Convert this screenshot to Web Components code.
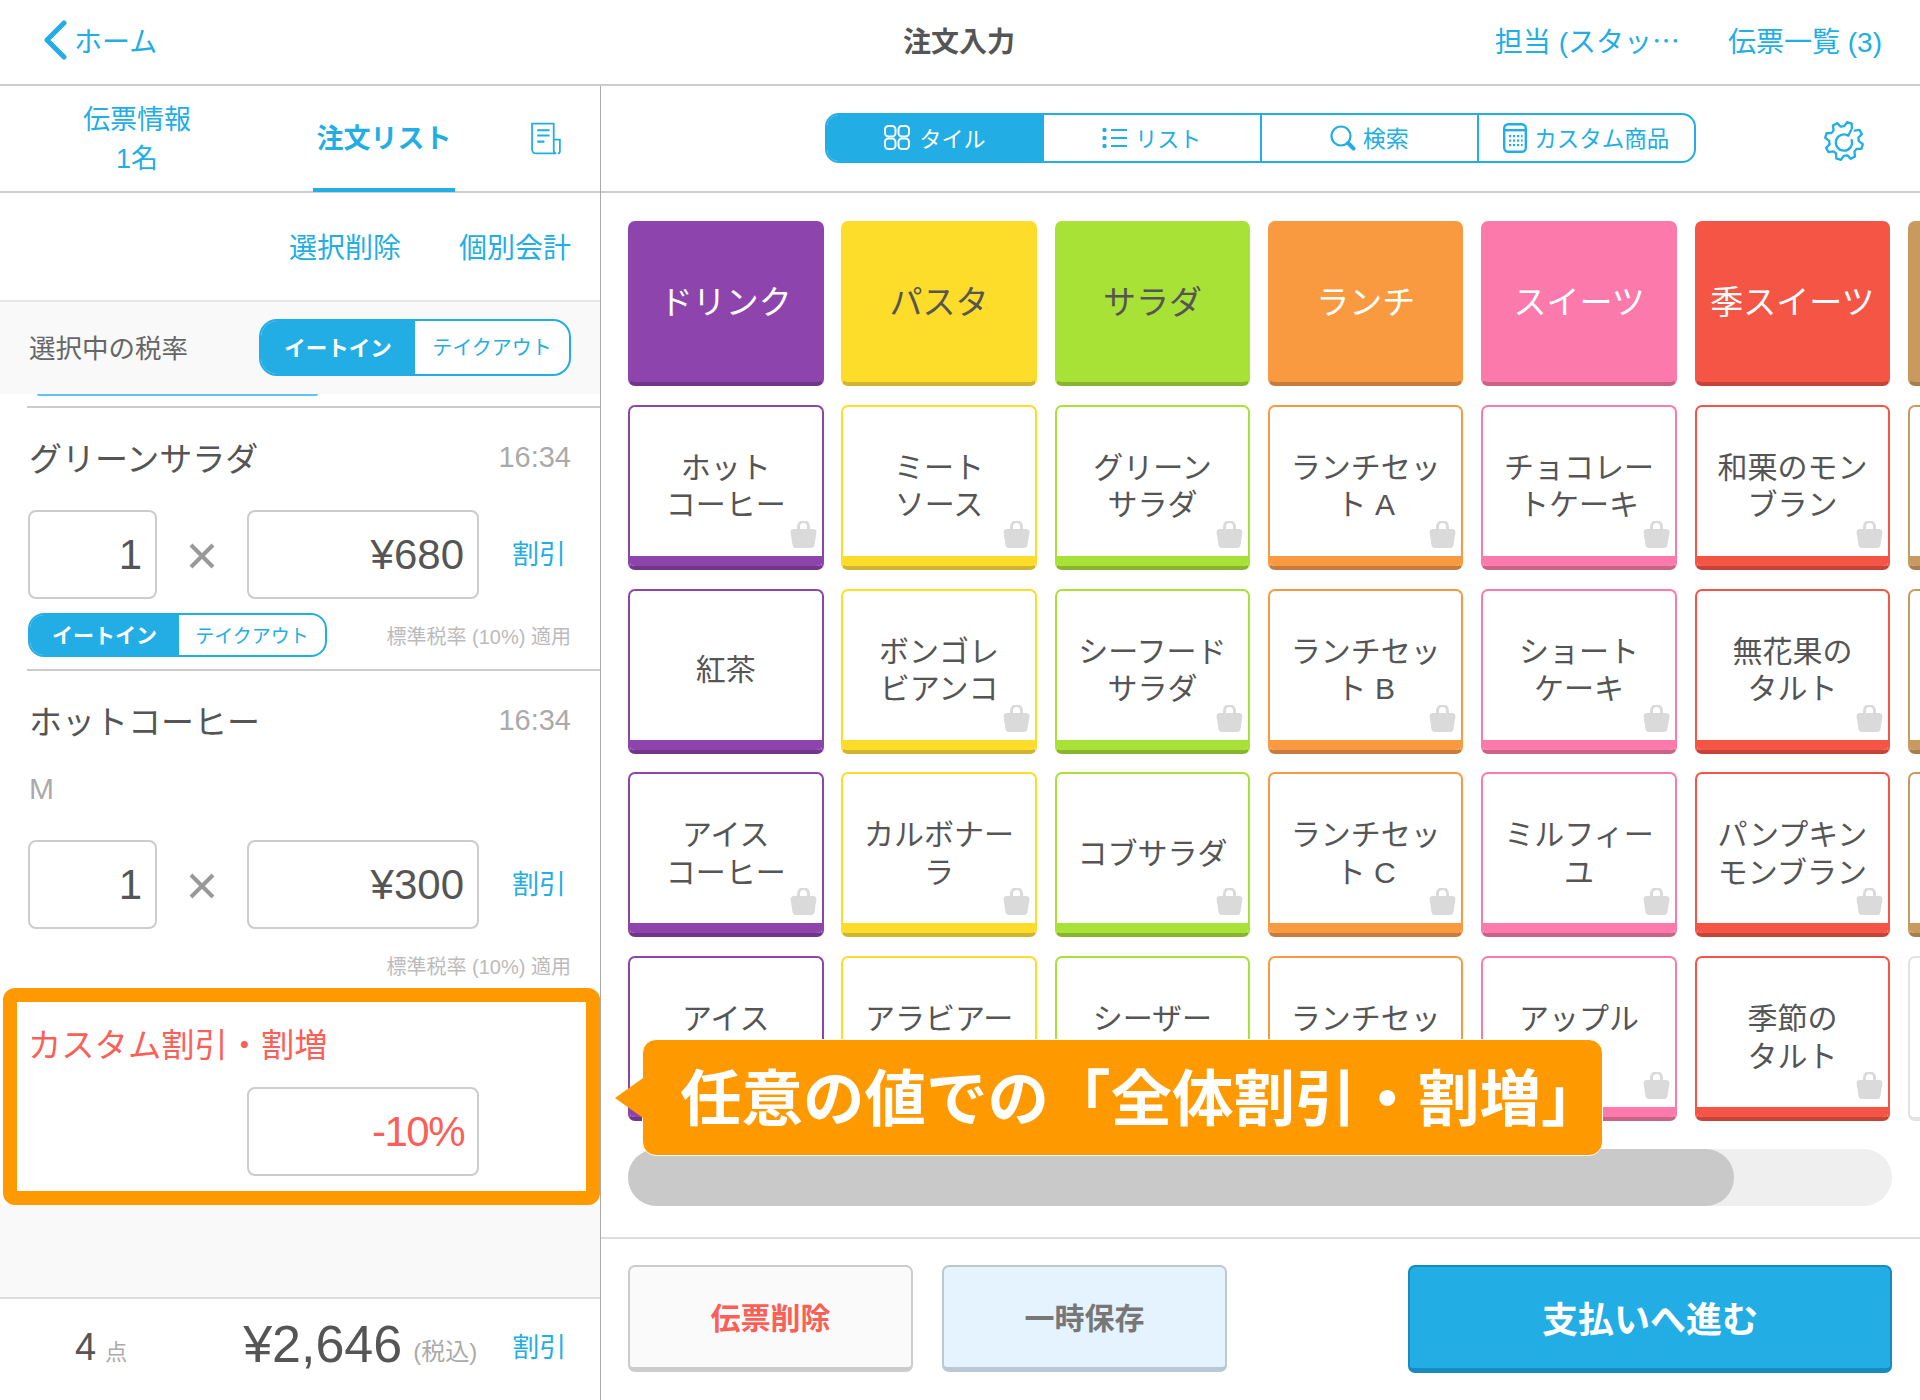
<!DOCTYPE html>
<html lang="ja">
<head>
<meta charset="utf-8">
<title>注文入力</title>
<style>
  html, body { margin: 0; padding: 0; background: #fff; }
  body { width: 1920px; height: 1400px; overflow: hidden; font-family: "Liberation Sans", "Noto Sans CJK JP", sans-serif; color: #555; }
</style>
</head>
<body>
<pos-app></pos-app>

<script>
const BLUE = '#22aee5';

// small helper, every element is just css + markup in an open shadow root
function define(name, css, render) {
  customElements.define(name, class extends HTMLElement {
    connectedCallback() {
      if (this.shadowRoot) return;
      this.attachShadow({ mode: 'open' });
      this.shadowRoot.innerHTML = `<style>${css}</style>${render(this)}`;
    }
  });
}

// outline of the settings gear, left open at the upper right
function gearPath(cx, cy, ro, ri, teeth) {
  const pts = [];
  const step = 360 / teeth;
  for (let i = 0; i < teeth; i++) {
    const a = -22 + i * step;
    [[ri, -0.5], [ro, -0.3], [ro, 0.02], [ri, 0.2]].forEach(([r, f]) => {
      const t = (a + f * step) * Math.PI / 180;
      pts.push((cx + r * Math.cos(t)).toFixed(1) + ' ' + (cy + r * Math.sin(t)).toFixed(1));
    });
  }
  return 'M' + pts.join('L');
}

const icons = {
  tile: `<svg width="26" height="25" viewBox="0 0 26 25" fill="none" stroke="currentColor" stroke-width="2"><rect x="1" y="1" width="10.5" height="10.5" rx="3.5"/><rect x="14.5" y="1" width="10.5" height="10.5" rx="3.5"/><rect x="1" y="13.5" width="10.5" height="10.5" rx="3.5"/><rect x="14.5" y="13.5" width="10.5" height="10.5" rx="3.5"/></svg>`,
  list: `<svg width="26" height="22" viewBox="0 0 26 22" fill="currentColor"><circle cx="2.5" cy="3" r="2.2"/><circle cx="2.5" cy="11" r="2.2"/><circle cx="2.5" cy="19" r="2.2"/><rect x="9" y="2" width="16" height="2"/><rect x="9" y="10" width="16" height="2"/><rect x="9" y="18" width="16" height="2"/></svg>`,
  search: `<svg width="26" height="26" viewBox="0 0 26 26" fill="none" stroke="currentColor"><circle cx="11" cy="11" r="9.5" stroke-width="2.2"/><path d="M18 18l5.5 5.5" stroke-width="4" stroke-linecap="round"/></svg>`,
  calc: `<svg width="24" height="30" viewBox="0 0 24 30"><rect x="1.2" y="1.2" width="21.6" height="27.6" rx="4" fill="none" stroke="currentColor" stroke-width="2.4"/><rect x="1.2" y="6" width="21.6" height="2.4" fill="currentColor"/><g fill="currentColor"><rect x="6" y="12" width="2.2" height="2.2"/><rect x="10" y="12" width="2.2" height="2.2"/><rect x="14" y="12" width="2.2" height="2.2"/><rect x="18" y="12" width="1.6" height="2.2"/><rect x="6" y="16.5" width="2.2" height="2.2"/><rect x="10" y="16.5" width="2.2" height="2.2"/><rect x="14" y="16.5" width="2.2" height="2.2"/><rect x="18" y="16.5" width="1.6" height="2.2"/><rect x="6" y="21" width="2.2" height="2.2"/><rect x="10" y="21" width="2.2" height="2.2"/><rect x="14" y="21" width="2.2" height="2.2"/><rect x="18" y="21" width="1.6" height="2.2"/></g></svg>`,
  gear: `<svg width="42" height="42" viewBox="0 0 44 44" fill="none" stroke="${BLUE}" stroke-width="2.4" stroke-linejoin="round" stroke-linecap="round"><path d="${gearPath(22, 22, 20, 15.5, 8)}"/><path d="M29.5 10.5 L26.5 16.5 A8.5 8.5 0 1 0 30 21"/></svg>`,
  receipt: `<svg width="33" height="33" viewBox="0 0 32 32" fill="none" stroke="${BLUE}" stroke-width="1.7"><path d="M2 1.5h21v26c0 1.5 1 3 2.5 3H6c-2.5 0-4-1.5-4-4z"/><path d="M23 17h6v11c0 1.5-1 2.5-2 2.5"/><path d="M7 8h12M7 13h12M7 19h7" stroke-width="2"/></svg>`,
  bag: `<svg width="27" height="27" viewBox="0 0 27 27"><path d="M8.5 10V5.5a5 5 0 0 1 10 0V10" fill="none" stroke="#dadada" stroke-width="3"/><path d="M4 8h19c2 0 3.5 1 3.5 3l-2 13c-.3 2-1.5 3-3.5 3H6c-2 0-3.2-1-3.5-3l-2-13C.5 9 2 8 4 8z" fill="#dadada"/></svg>`
};

define('pos-header', `
  :host { display: grid; grid-template-columns: 1fr auto 1fr; align-items: center; height: 86px; box-sizing: border-box; border-bottom: 2px solid #ccc; padding-bottom: 5px; font-size: 28px; color: ${BLUE}; }
  .back { display: flex; align-items: center; gap: 7px; margin-left: 43px; }
  .title { text-align: center; font-weight: 700; color: #555; font-size: 28px; margin-left: -2px; }
  .right { display: flex; justify-content: flex-end; gap: 48px; margin-right: 38px; white-space: nowrap; }
  .dots { font-family: "Noto Sans CJK JP", sans-serif; }
`, () => `
  <div class="back">
    <svg width="24" height="40" viewBox="0 0 24 40" fill="none" stroke="${BLUE}" stroke-width="5" stroke-linecap="round" stroke-linejoin="round"><path d="M21 3L4 20l17 17"/></svg>
    <span>ホーム</span>
  </div>
  <div class="title">注文入力</div>
  <div class="right"><span>担当 (スタッ<span class="dots">…</span></span><span>伝票一覧 (3)</span></div>
`);

define('order-tabs', `
  :host { display: flex; height: 107px; box-sizing: border-box; border-bottom: 2px solid #ccc; color: ${BLUE}; font-size: 27px; }
  .info { width: 274px; margin-top: 15px; text-align: center; line-height: 39px; }
  .active { width: 142px; margin-left: 39px; box-sizing: border-box; border-bottom: 4px solid ${BLUE}; margin-bottom: -1px; font-weight: 700; text-align: center; line-height: 107px; font-size: 27px; white-space: nowrap; }
  .icon { display: flex; align-items: center; margin-left: 75px; }
`, () => `
  <div class="info">伝票情報<br>1名</div>
  <div class="active">注文リスト</div>
  <div class="icon">${icons.receipt}</div>
`);

define('order-actions', `
  :host { display: flex; justify-content: flex-end; align-items: center; gap: 58px; height: 107px; padding: 0 29px 2px 0; box-sizing: border-box; color: ${BLUE}; font-size: 28px; }
`, () => `<span>選択削除</span><span>個別会計</span>`);

define('tax-toggle', `
  :host { display: inline-flex; box-sizing: border-box; border: 2px solid ${BLUE}; border-radius: var(--r, 16px); overflow: hidden; background: #fff; width: var(--w); height: var(--h); font-size: var(--fs, 20px); }
  div { display: flex; align-items: center; justify-content: center; white-space: nowrap; padding-bottom: 2px; box-sizing: border-box; }
  .on { width: var(--on); background: ${BLUE}; color: #fff; font-weight: 700; }
  .off { flex: 1; color: ${BLUE}; font-size: var(--off, 20px); }
`, () => `<div class="on">イートイン</div><div class="off">テイクアウト</div>`);

define('tax-rate-row', `
  :host { display: flex; align-items: center; justify-content: space-between; height: 94px; box-sizing: border-box; padding: 0 29px; background: #f9f9f9; border-top: 2px solid #e6e6e6; font-size: 26.5px; color: #666; }
  span { margin-top: -4px; }
  tax-toggle { --w: 312px; --h: 57px; --on: 154px; --fs: 21.5px; --off: 20px; --r: 18px; margin-top: -2px; }
`, () => `<span>選択中の税率</span><tax-toggle></tax-toggle>`);

define('field-box', `
  :host { display: flex; align-items: center; justify-content: flex-end; box-sizing: border-box; width: var(--w, 232px); height: 89px; border: 2px solid #ccc; border-radius: 8px; padding-right: 13px; font-size: var(--fs, 42px); letter-spacing: var(--ls, 0); color: var(--c, #555); background: #fff; }
`, () => `<slot></slot>`);

define('order-item', `
  :host { display: block; }
  .head { display: flex; justify-content: space-between; align-items: center; height: 98px; padding: 0 29px 0 29px; }
  .name { font-size: 33px; color: #555; }
  .time { font-size: 29px; color: #aaa; }
  .opt { height: 40px; line-height: 40px; padding-left: 29px; font-size: 30px; color: #aaa; margin-bottom: 31px; }
  .nums { display: flex; align-items: center; padding-left: 28px; margin-top: var(--nt, 0); }
  .x { width: 90px; display: flex; justify-content: center; margin-top: 3px; }
  .qty { --w: 129px; }
  .link { margin-left: 33px; font-size: 27px; color: ${BLUE}; margin-top: -4px; }
  .foot { display: flex; align-items: center; justify-content: space-between; height: 44px; padding: 0 29px 0 28px; margin-top: 14px; }
  .note { font-size: 20px; color: #bbb; margin-left: auto; }
  tax-toggle { --w: 299px; --h: 44px; --on: 149px; --fs: 21px; --off: 19px; --r: 16px; }
`, el => {
  const opt = el.getAttribute('opt');
  return `
  <div class="head"><span class="name">${el.getAttribute('name')}</span><span class="time">${el.getAttribute('time')}</span></div>
  ${opt ? `<div class="opt">${opt}</div>` : ''}
  <div class="nums">
    <field-box class="qty">1</field-box>
    <div class="x"><svg width="26" height="26" viewBox="0 0 26 26" stroke="#999" stroke-width="4"><path d="M2 2l22 22M24 2L2 24"/></svg></div>
    <field-box>${el.getAttribute('price')}</field-box>
    <span class="link">割引</span>
  </div>
  <div class="foot">
    ${el.hasAttribute('toggle') ? '<tax-toggle></tax-toggle>' : ''}
    <span class="note">標準税率 (10%) 適用</span>
  </div>`;
});

define('discount-box', `
  :host { display: block; margin-left: 3px; height: 217px; box-sizing: border-box; border: 14px solid #ff9900; border-radius: 12px; background: #fff; position: relative; z-index: 2; }
  .t { font-size: 33.3px; color: #fb5f57; padding: 20px 0 0 11px; line-height: 48px; }
  .row { padding-left: 230px; margin-top: 17px; }
  field-box { --c: #fb5f57; --ls: -1.5px; }
`, () => `<div class="t">カスタム割引・割増</div><div class="row"><field-box>-10%</field-box></div>`);

define('order-total', `
  :host { display: flex; align-items: center; height: 103px; box-sizing: border-box; border-top: 2px solid #ddd; background: #fff; padding: 0 0 5px 75px; }
  .n { font-size: 38px; color: #555; }
  .u { font-size: 22px; color: #aaa; margin-left: 9px; margin-top: 6px; }
  .sum { font-size: 52px; color: #555; margin-left: 116px; margin-top: -6px; }
  .tax { font-size: 24px; color: #aaa; margin-left: 11px; margin-top: 5px; white-space: nowrap; }
  .link { font-size: 27px; color: ${BLUE}; margin-left: 35px; margin-top: -4px; }
`, () => `<span class="n">4</span><span class="u">点</span><span class="sum">¥2,646</span><span class="tax">(税込)</span><span class="link">割引</span>`);

define('order-panel', `
  :host { display: flex; flex-direction: column; width: 601px; box-sizing: border-box; border-right: 1px solid #aaa; height: 1314px; }
  .strip { height: 12px; box-sizing: border-box; }
  .strip i { display: block; width: 281px; height: 2px; margin-left: 37px; background: #5cc4ef; border-radius: 0 0 2px 2px; }
  .rule { height: 2px; background: #ccc; margin-left: 27px; }
  .fill { flex: 1; background: #f9f9f9; }
  .last { margin-bottom: 1px; }
`, () => `
  <order-tabs></order-tabs>
  <order-actions></order-actions>
  <tax-rate-row></tax-rate-row>
  <div class="strip"><i></i></div>
  <div class="rule"></div>
  <order-item name="グリーンサラダ" time="16:34" price="¥680" toggle style="--nt:4px"></order-item>
  <div style="height:12px"></div>
  <div class="rule"></div>
  <order-item class="last" name="ホットコーヒー" time="16:34" price="¥300" opt="M"></order-item>
  <discount-box></discount-box>
  <div class="fill"></div>
  <order-total></order-total>
`);

define('view-seg', `
  :host { display: flex; box-sizing: border-box; width: 871px; height: 50px; border: 2px solid ${BLUE}; border-radius: 14px; overflow: hidden; font-size: 22px; color: ${BLUE}; }
  div { flex: 1; display: flex; align-items: center; justify-content: center; gap: 7px; border-left: 2px solid ${BLUE}; white-space: nowrap; }
  div:first-of-type { border-left: 0; background: ${BLUE}; color: #fff; gap: 10px; }
  span { margin-top: -2px; }
  .s { font-size: 23px; }
`, () => `
  <div>${icons.tile}<span>タイル</span></div>
  <div>${icons.list}<span>リスト</span></div>
  <div>${icons.search}<span class="s">検索</span></div>
  <div>${icons.calc}<span style="font-size:22.5px">カスタム商品</span></div>
`);

define('menu-toolbar', `
  :host { display: flex; align-items: center; height: 107px; box-sizing: border-box; border-bottom: 2px solid #ccc; padding: 0 0 2px 224px; }
  .gear { margin-left: 127px; display: flex; margin-top: 6px; }
`, () => `<view-seg></view-seg><div class="gear">${icons.gear}</div>`);

define('menu-tile', `
  :host { display: flex; flex-direction: column; box-sizing: border-box; position: relative; border-radius: 7px; overflow: hidden; border: 2px solid var(--c); border-bottom: 4px solid var(--d); font-size: 30px; line-height: 37.5px; color: #555; background: #fff; text-align: center; }
  :host([cat]) { background: var(--c); font-size: 33px; color: var(--t, #fff); }
  :host([cat]) .body { padding-top: 1px; padding-bottom: 0; }
  .body { flex: 1; display: flex; align-items: center; justify-content: center; padding-top: 10px; }
  .band { height: 10px; background: var(--c); }
  :host([cat]) .band { display: none; }
  .bag { position: absolute; right: 5px; bottom: 18px; display: flex; }
  :host([nb]) .band { background: #fff; }
`, el => `
  <div class="body"><span><slot></slot></span></div>
  <div class="band"></div>
  ${el.hasAttribute('bag') ? `<div class="bag">${icons.bag}</div>` : ''}
`);

const palette = [
  { c: '#8e44ad', d: '#71368a' },
  { c: '#fddc2a', d: '#cfb532', t: '#555' },
  { c: '#a8e236', d: '#8ab42f', t: '#555' },
  { c: '#f99a40', d: '#c67b3f' },
  { c: '#fc7aab', d: '#c76488' },
  { c: '#f55545', d: '#c4443a' },
  { c: '#c99a5f', d: '#a67f4e' }
];
// last row: the second lines behind the callout can't be read in the screenshot, so they stay blank
const menu = [
  ['ドリンク', 'ホット<br>コーヒー', '紅茶', 'アイス<br>コーヒー', 'アイス<br>&nbsp;'],
  ['パスタ', 'ミート<br>ソース', 'ボンゴレ<br>ビアンコ', 'カルボナー<br>ラ', 'アラビアー<br>&nbsp;'],
  ['サラダ', 'グリーン<br>サラダ', 'シーフード<br>サラダ', 'コブサラダ', 'シーザー<br>&nbsp;'],
  ['ランチ', 'ランチセッ<br>ト A', 'ランチセッ<br>ト B', 'ランチセッ<br>ト C', 'ランチセッ<br>&nbsp;'],
  ['スイーツ', 'チョコレー<br>トケーキ', 'ショート<br>ケーキ', 'ミルフィー<br>ユ', 'アップル<br>&nbsp;'],
  ['季スイーツ', '和栗のモン<br>ブラン', '無花果の<br>タルト', 'パンプキン<br>モンブラン', '季節の<br>タルト'],
  ['', '', '', '', '']
];

define('menu-grid', `
  :host { display: grid; grid-template-columns: repeat(7, 195.5px); grid-template-rows: repeat(5, 165px); column-gap: 17.83px; row-gap: 18.75px; padding: 28px 0 0 27px; height: 928px; width: 1319px; box-sizing: border-box; overflow: hidden; }
`, () => {
  let html = '';
  for (let r = 0; r < 5; r++) {
    menu.forEach((col, i) => {
      let p = palette[i];
      const noBag = r === 0 || col[r] === '紅茶' || i === 6;
      if (i === 6 && r === 4) p = { c: '#e2e2e2', d: '#e2e2e2' };
      const style = `--c:${p.c};--d:${p.d};${p.t ? `--t:${p.t};` : ''}`;
      html += `<menu-tile style="${style}" ${r === 0 ? 'cat' : ''} ${noBag ? '' : 'bag'} ${i === 6 && r === 4 ? 'nb' : ''}>${col[r]}</menu-tile>`;
    });
  }
  return html;
});

define('h-scrollbar', `
  :host { display: block; height: 57px; margin: 28px 28px 0 27px; border-radius: 29px; background: #efefef; }
  i { display: block; height: 100%; width: 1106px; border-radius: 29px; background: #c9c9c9; }
`, () => `<i></i>`);

define('pos-button', `
  :host { display: flex; align-items: center; justify-content: center; box-sizing: border-box; height: var(--h, 107px); width: var(--w); border: 2px solid var(--b); border-bottom-width: 5px; border-radius: 7px; padding-bottom: 2px; background: var(--bg); color: var(--fg); font-weight: 700; font-size: var(--fs, 30px); }
`, () => `<slot></slot>`);

define('menu-footer', `
  :host { display: flex; align-items: flex-start; box-sizing: border-box; border-top: 2px solid #ddd; margin-top: 31px; padding: 26px 0 0 27px; height: 162px; }
  .del { --w: 285px; --b: #ccc; --bg: #fafafa; --fg: #fb5f57; }
  .save { --w: 285px; --b: #b9c8d3; --bg: #e4f3fe; --fg: #777; margin-left: 29px; }
  .pay { --w: 484px; --h: 108px; --b: #178bbd; --bg: ${BLUE}; --fg: #fff; --fs: 36px; margin-left: auto; margin-right: 28px; font-weight: 700; }
`, () => `
  <pos-button class="del">伝票削除</pos-button>
  <pos-button class="save">一時保存</pos-button>
  <pos-button class="pay">支払いへ進む</pos-button>
`);

define('menu-panel', `
  :host { display: block; flex: 1; min-width: 0; overflow: hidden; }
`, () => `<menu-toolbar></menu-toolbar><menu-grid></menu-grid><h-scrollbar></h-scrollbar><menu-footer></menu-footer>`);

// the annotation over the screen, so it sits on absolute coordinates
define('pos-callout', `
  :host { position: absolute; left: 642px; top: 1039px; width: 961px; height: 117px; box-sizing: border-box; background: #ff9900; border: 1.5px solid #fff; border-radius: 14px; display: flex; align-items: center; padding: 0 0 7px 37px; z-index: 5; color: #fff; font-size: 61.5px; font-weight: 700; white-space: nowrap; }
  .tip { position: absolute; left: -28px; top: 38px; width: 0; height: 0; border-style: solid; border-width: 20px 28px 20px 0; border-color: transparent #ff9900 transparent transparent; }
`, () => `<span class="tip"></span><span>任意の値での「全体割引・割増」</span>`);

define('pos-app', `
  :host { display: block; position: relative; width: 1920px; height: 1400px; overflow: hidden; background: #fff; }
  .main { display: flex; }
`, () => `
  <pos-header></pos-header>
  <div class="main"><order-panel></order-panel><menu-panel></menu-panel></div>
  <pos-callout></pos-callout>
`);
</script>
</body>
</html>
